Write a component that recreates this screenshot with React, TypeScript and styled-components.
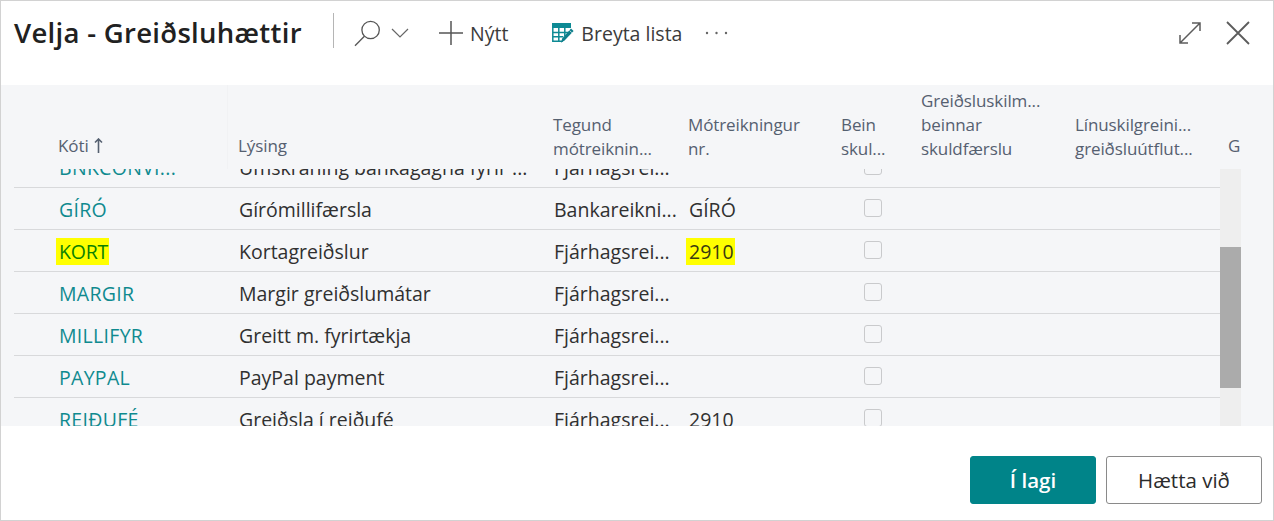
import { FunctionComponent } from "react";
import styled, { createGlobalStyle } from "styled-components";

const GlobalStyle = createGlobalStyle`
  html, body {
    margin: 0;
    padding: 0;
    background: #fff;
  }
  body {
    font-family: "Open Sans", "Noto Sans", "Liberation Sans", sans-serif;
  }
`;

const COLUMNS = "214px 315px 135px 153px 80px 154px 153px";

const Dialog = styled.div`
  box-sizing: border-box;
  width: 1274px;
  height: 521px;
  border: 1px solid #d2d2d2;
  display: flex;
  flex-direction: column;
  overflow: hidden;
  background: #fff;
`;

const Header = styled.header`
  height: 84px;
  flex: none;
  display: flex;
  align-items: flex-start;
  padding: 12px 23px 0 13px;
  box-sizing: border-box;
`;

const Title = styled.h1`
  margin: 0;
  width: 319px;
  height: 35px;
  flex: none;
  font-size: 27.5px;
  line-height: 40px;
  font-weight: 600;
  letter-spacing: 0.3px;
  color: #212121;
  white-space: nowrap;
  border-right: 1px solid #b5b5b5;
`;

const Toolbar = styled.nav`
  display: flex;
  align-items: center;
  height: 40px;
  flex: 1;
  color: #3b3b3b;
`;

const ToolIcon = styled.svg<{ $ml: number }>`
  flex: none;
  margin-left: ${(p) => p.$ml}px;
  display: block;
`;

const ToolLabel = styled.span<{ $ml: number }>`
  margin-left: ${(p) => p.$ml}px;
  font-size: 19.5px;
  color: #3b3b3b;
  white-space: nowrap;
`;

const WindowActions = styled.div`
  margin-left: auto;
  display: flex;
  align-items: center;
  gap: 24px;
`;

const GridArea = styled.section`
  height: 341px;
  flex: none;
  display: flex;
  flex-direction: column;
  background: #f5f6f8;
`;

const HeadRow = styled.div`
  height: 84px;
  flex: none;
  display: grid;
  grid-template-columns: ${COLUMNS} 1fr;
  align-items: end;
  padding-left: 13px;
`;

const HeadCell = styled.div<{ $single?: boolean }>`
  padding-left: 10px;
  padding-bottom: ${(p) => (p.$single ? "11px" : "8px")};
  font-size: 17px;
  line-height: 24px;
  letter-spacing: -0.1px;
  color: #556070;
  white-space: pre-line;
`;

const FrozenHeadCell = styled(HeadCell)`
  align-self: stretch;
  display: flex;
  align-items: flex-end;
  gap: 5px;
  padding-left: 44px;
  border-right: 1px solid #f1f2f4;
`;

const BodyArea = styled.div`
  flex: 1;
  min-height: 0;
  display: flex;
  overflow: hidden;
  padding-left: 13px;
`;

const RowList = styled.div`
  width: 1206px;
  flex: none;
  margin-top: -23px;
`;

const Row = styled.div`
  height: 39px;
  padding-top: 2px;
  border-bottom: 1px solid #d8d9db;
  display: grid;
  grid-template-columns: ${COLUMNS};
  align-items: center;
  font-size: 19.5px;
  color: #303030;
  white-space: nowrap;
`;

const CodeCell = styled.div`
  padding-left: 45px;
  letter-spacing: 0.3px;
  color: #0f8a8f;
`;

const Cell = styled.div`
  padding-left: 11px;
`;

const AmountCell = styled.div`
  padding-left: 11px;
`;

const CheckCell = styled.div`
  padding-left: 33px;
`;

const Checkbox = styled.span`
  display: block;
  box-sizing: border-box;
  width: 18px;
  height: 18px;
  margin: -1px 0 2px;
  border: 1px solid #c9cacc;
  border-radius: 3px;
`;

const Marked = styled.span<{ $code?: boolean }>`
  background: #ffff00;
  padding: 0 1px 0 3px;
  margin-left: -3px;
  letter-spacing: ${(p) => (p.$code ? "-0.2px" : "0")};
  color: ${(p) => (p.$code ? "#0a8200" : "#3a3a10")};
`;

const ScrollTrack = styled.div`
  width: 21px;
  flex: none;
  background: #eeeeee;
  padding-top: 78px;
  box-sizing: border-box;
`;

const ScrollThumb = styled.div`
  height: 141px;
  background: #ababab;
`;

const Footer = styled.footer`
  flex: 1;
  display: flex;
  justify-content: flex-end;
  align-items: flex-start;
  gap: 10px;
  padding: 30px 11px 0 0;
`;

const Button = styled.button<{ $primary?: boolean }>`
  box-sizing: border-box;
  height: 48px;
  width: ${(p) => (p.$primary ? "126px" : "156px")};
  border-radius: 3px;
  border: 1px solid ${(p) => (p.$primary ? "#008489" : "#8a8a8a")};
  background: ${(p) => (p.$primary ? "#008489" : "#fff")};
  color: ${(p) => (p.$primary ? "#fff" : "#2b2b2b")};
  font-family: inherit;
  font-size: 20.5px;
  font-weight: ${(p) => (p.$primary ? 600 : 400)};
  padding: 0;
`;

const SearchIcon = () => (
  <ToolIcon $ml={20} width="27" height="27" viewBox="0 0 27 27" fill="none" stroke="#555" strokeWidth="1.3">
    <circle cx="16.6" cy="10" r="8.7" />
    <path d="M10.4 16.2 1 25.8" />
  </ToolIcon>
);

const ChevronIcon = () => (
  <ToolIcon $ml={10} width="18" height="10" viewBox="0 0 18 10" fill="none" stroke="#666" strokeWidth="1.2">
    <path d="M1 1l8 8 8-8" />
  </ToolIcon>
);

const PlusIcon = () => (
  <ToolIcon $ml={30} width="24" height="24" viewBox="0 0 24 24" fill="none" stroke="#555" strokeWidth="1.5">
    <path d="M12 0v24M0 12h24" />
  </ToolIcon>
);

const EditListIcon = () => (
  <ToolIcon $ml={44} width="22" height="21" viewBox="0 0 22 21" fill="none">
    <path d="M0 0h19v5H0z" fill="#0d8a94" />
    <path d="M.8 5v13.2h10M6.8 5v13.2M12.8 5v8M.8 9.4h17.5M.8 13.8h10.5" stroke="#0d8a94" strokeWidth="1.5" />
    <path d="M19 5.6l2.6 2.4-8.8 9.2-3.8 2.6 1.2-4.4z" fill="#0f7f8c" />
    <path d="M17.5 7.4l2.4 2.4" stroke="#fff" strokeWidth="0.7" />
  </ToolIcon>
);

const MoreIcon = () => (
  <ToolIcon $ml={23} width="23" height="4" viewBox="0 0 23 4" fill="#666">
    <circle cx="2" cy="2" r="1.2" />
    <circle cx="11.5" cy="2" r="1.2" />
    <circle cx="21" cy="2" r="1.2" />
  </ToolIcon>
);

const ExpandIcon = () => (
  <svg width="24" height="24" viewBox="0 0 24 24" fill="none" stroke="#5c5c5c" strokeWidth="1.5">
    <path d="M2 22 22 2M14 2h8v8M2 14v8h8" />
  </svg>
);

const CloseIcon = () => (
  <svg width="24" height="24" viewBox="0 0 24 24" fill="none" stroke="#5c5c5c" strokeWidth="1.8">
    <path d="M1 1l22 22M23 1 1 23" />
  </svg>
);

const SortArrowIcon = styled.svg`
  flex: none;
  margin-bottom: 5px;
`;

const SortArrow = () => (
  <SortArrowIcon width="9" height="15" viewBox="0 0 9 15" fill="none" stroke="#556070" strokeWidth="1.6">
    <path d="M4.5 15V1M1 4.5 4.5 1 8 4.5" />
  </SortArrowIcon>
);

interface PaymentRow {
  code: string;
  description: string;
  accountType: string;
  account?: string;
  marked?: boolean;
}

const rows: PaymentRow[] = [
  { code: "BNKCONVI...", description: "Umskráning bankagagna fyrir ...", accountType: "Fjárhagsrei..." },
  { code: "GÍRÓ", description: "Gírómillifærsla", accountType: "Bankareikni...", account: "GÍRÓ" },
  { code: "KORT", description: "Kortagreiðslur", accountType: "Fjárhagsrei...", account: "2910", marked: true },
  { code: "MARGIR", description: "Margir greiðslumátar", accountType: "Fjárhagsrei..." },
  { code: "MILLIFYR", description: "Greitt m. fyrirtækja", accountType: "Fjárhagsrei..." },
  { code: "PAYPAL", description: "PayPal payment", accountType: "Fjárhagsrei..." },
  { code: "REIÐUFÉ", description: "Greiðsla í reiðufé", accountType: "Fjárhagsrei...", account: "2910" }
];

const App: FunctionComponent = () => (
  <Dialog>
    <GlobalStyle />
    <Header>
      <Title>Velja - Greiðsluhættir</Title>
      <Toolbar>
        <SearchIcon />
        <ChevronIcon />
        <PlusIcon />
        <ToolLabel $ml={7}>Nýtt</ToolLabel>
        <EditListIcon />
        <ToolLabel $ml={7}>Breyta lista</ToolLabel>
        <MoreIcon />
        <WindowActions>
          <ExpandIcon />
          <CloseIcon />
        </WindowActions>
      </Toolbar>
    </Header>
    <GridArea>
      <HeadRow>
        <FrozenHeadCell $single>
          Kóti <SortArrow />
        </FrozenHeadCell>
        <HeadCell $single>Lýsing</HeadCell>
        <HeadCell>{"Tegund\nmótreiknin..."}</HeadCell>
        <HeadCell>{"Mótreikningur\nnr."}</HeadCell>
        <HeadCell>{"Bein\nskul..."}</HeadCell>
        <HeadCell>{"Greiðsluskilm...\nbeinnar\nskuldfærslu"}</HeadCell>
        <HeadCell>{"Línuskilgreini...\ngreiðsluútflut..."}</HeadCell>
        <HeadCell $single>G</HeadCell>
      </HeadRow>
      <BodyArea>
        <RowList>
          {rows.map((row) => (
            <Row key={row.code}>
              <CodeCell>{row.marked ? <Marked $code>{row.code}</Marked> : row.code}</CodeCell>
              <Cell>{row.description}</Cell>
              <Cell>{row.accountType}</Cell>
              <AmountCell>{row.marked ? <Marked>{row.account}</Marked> : row.account}</AmountCell>
              <CheckCell>
                <Checkbox />
              </CheckCell>
            </Row>
          ))}
        </RowList>
        <ScrollTrack>
          <ScrollThumb />
        </ScrollTrack>
      </BodyArea>
    </GridArea>
    <Footer>
      <Button $primary>Í lagi</Button>
      <Button>Hætta við</Button>
    </Footer>
  </Dialog>
);

export default App;
